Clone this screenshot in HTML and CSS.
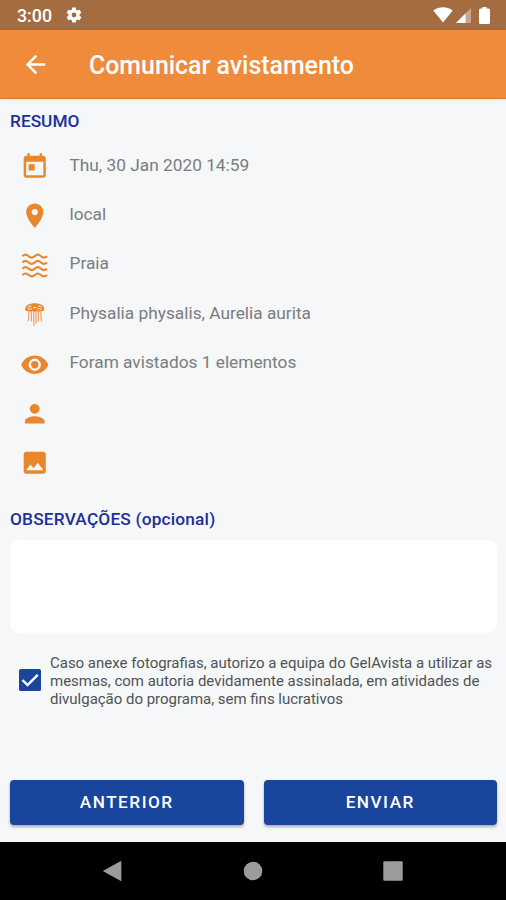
FILE: index.html
```html
<!DOCTYPE html>
<html lang="pt">
<head>
    <meta charset="UTF-8">
    <meta name="viewport" content="width=device-width, initial-scale=1.0">
    <title>Comunicar avistamento</title>
    <link rel="stylesheet" href="styles.css">
</head>
<body>
    <div class="status-bar">
        <span class="time">3:00</span>
        <svg class="gear" viewBox="0 0 24 24"><path fill-rule="evenodd" d="M19.4 13c0-.3.1-.6.1-1s0-.7-.1-1l2.100-1.650c.2-.15.250-.42.120-.64l-2-3.460c-.12-.22-.39-.3-.61-.22l-2.490 1c-.52-.4-1.080-.73-1.690-.98l-.38-2.650A.49.49 0 0 0 14 2h-4c-.25 0-.46.18-.49.42l-.38 2.650c-.61.25-1.170.59-1.690.98l-2.490-1c-.23-.09-.49 0-.61.22l-2 3.460c-.13.22-.07.49.12.64L4.570 11c-.04.3-.07.65-.07 1s.03.66.07 1l-2.110 1.650c-.19.15-.24.42-.12.64l2 3.460c.12.22.39.3.61.22l2.490-1c.52.4 1.080.73 1.690.98l.38 2.650c.03.24.24.42.49.42h4c.25 0 .46-.18.49-.42l.38-2.650c.61-.25 1.170-.59 1.690-.98l2.490 1c.23.09.49 0 .61-.22l2-3.460c.12-.22.070-.49-.12-.64zM12 15.200a3.200 3.200 0 1 1 0-6.400 3.200 3.200 0 0 1 0 6.400z"/></svg>
        <div class="status-icons">
            <svg width="20" height="16" viewBox="0 0 20 16"><path d="M.3 3.500C6-.7 14-.7 19.700 3.500L10 15.500z"/></svg>
            <svg width="15" height="15" viewBox="0 0 15 15"><path d="M0 15L15 0v15z" opacity=".4"/><path d="M0 15L9.500 5.500V15z"/></svg>
            <svg class="battery" width="11" height="17" viewBox="0 0 11 17"><path d="M3.300 0h4.400v1.500H9.500q1.500 0 1.500 1.500v12.500q0 1.500-1.500 1.500h-8Q0 17 0 15.500V3q0-1.500 1.500-1.500h1.800z"/></svg>
        </div>
    </div>

    <header class="app-bar">
        <svg class="back" viewBox="0 0 24 24"><path d="M20 11H7.830l5.590-5.590L12 4l-8 8 8 8 1.410-1.410L7.830 13H20z"/></svg>
        <h1>Comunicar avistamento</h1>
    </header>

    <main class="content">
        <h2>RESUMO</h2>
        <ul class="summary">
            <li>
                <svg viewBox="0 0 24 24"><path d="M19 3h-1V1h-2v2H8V1H6v2H5c-1.110 0-2 .9-2 2v14c0 1.100.89 2 2 2h14c1.100 0 2-.9 2-2V5c0-1.100-.9-2-2-2zm0 16H5V8h14zM7 10h5v5H7z"/></svg>
                <span>Thu, 30 Jan 2020 14:59</span>
            </li>
            <li>
                <svg viewBox="0 0 24 24"><path d="M12 2C8.130 2 5 5.130 5 9c0 5.250 7 13 7 13s7-7.750 7-13c0-3.870-3.130-7-7-7zm0 9.500a2.500 2.500 0 0 1 0-5 2.500 2.500 0 0 1 0 5z"/></svg>
                <span>local</span>
            </li>
            <li>
                <svg class="waves" viewBox="0 0 24 24">
                    <path d="M2 4.200q2.500 -2.400 5 0t5 0 5 0 5 0"/>
                    <path d="M2 9.300q2.500 -2.400 5 0t5 0 5 0 5 0"/>
                    <path d="M2 14.400q2.500 -2.400 5 0t5 0 5 0 5 0"/>
                    <path d="M2 19.500q2.500 -2.400 5 0t5 0 5 0 5 0"/>
                </svg>
                <span>Praia</span>
            </li>
            <li>
                <svg class="jellyfish" viewBox="0 0 24 24">
                    <path class="bell" d="M4.300 7.600C4 4.400 7.500 2.600 12 2.600s8 1.800 7.700 5c-.2 1.500-1.700 2-2.700 1.100-1.200 1.100-2.300 1.100-3.300.2-1 .9-2.400.9-3.400 0-1 .9-2.100.9-3.300-.2-1 .9-2.500.4-2.700-1.100z"/>
                    <path class="shine" d="M6 6.200q1.300-1.500 3.300-1.200M14.700 5q2-.3 3.300 1.200M6.500 7.700q1.600-1.200 3.200-.3M14.300 7.400q1.600-.9 3.200.3M10.800 6.200h2.400"/>
                    <path class="arms" d="M7.200 9v4.200q0 2-.7 4.200M9.300 9v8.500M11.200 9v7.500q0 2 .4 4.500M13.100 9v10M15 9v8.500M17 9v4q0 2 .7 4.500"/>
                </svg>
                <span>Physalia physalis, Aurelia aurita</span>
            </li>
            <li>
                <svg viewBox="0 0 24 24"><path d="M12 4.500C7 4.500 2.730 7.610 1 12c1.730 4.390 6 7.500 11 7.500s9.270-3.110 11-7.500c-1.730-4.390-6-7.500-11-7.500zM12 17a5 5 0 1 1 0-10 5 5 0 0 1 0 10zm0-8a3 3 0 1 0 0 6 3 3 0 0 0 0-6z"/></svg>
                <span>Foram avistados 1 elementos</span>
            </li>
            <li>
                <svg viewBox="0 0 24 24"><path d="M12 12c2.210 0 4-1.790 4-4s-1.790-4-4-4-4 1.790-4 4 1.790 4 4 4zm0 2c-2.670 0-8 1.340-8 4v2h16v-2c0-2.660-5.330-4-8-4z"/></svg>
                <span></span>
            </li>
            <li>
                <svg viewBox="0 0 24 24"><path d="M21 19V5c0-1.100-.9-2-2-2H5c-1.100 0-2 .9-2 2v14c0 1.100.9 2 2 2h14c1.100 0 2-.9 2-2zM8.500 13.500l2.500 3.010L14.500 12l4.500 6H5z"/></svg>
                <span></span>
            </li>
        </ul>

        <h2 class="notes-title">OBSERVAÇÕES (opcional)</h2>
        <textarea class="notes"></textarea>

        <div class="consent">
            <svg class="checkbox" viewBox="0 0 18 18"><rect width="18" height="18" rx="1.500"/><path d="M2.800 9l4.200 4.200 8.300-8.400"/></svg>
            <p>Caso anexe fotografias, autorizo a equipa do GelAvista a utilizar as<br>mesmas, com autoria devidamente assinalada, em atividades de<br>divulgação do programa, sem fins lucrativos</p>
        </div>

        <div class="actions">
            <button>ANTERIOR</button>
            <button>ENVIAR</button>
        </div>
    </main>

    <nav class="nav-bar">
        <svg viewBox="0 0 22 22"><path d="M.8 11L19.300 .8v20.400z"/></svg>
        <svg viewBox="0 0 22 22"><circle cx="11" cy="11" r="9.300"/></svg>
        <svg viewBox="0 0 22 22"><rect x="1.300" y="1.300" width="19.400" height="19.400" rx="1"/></svg>
    </nav>
</body>
</html>
```

FILE: styles.css
```css
* {
    box-sizing: border-box;
}
body {
    font-family: Roboto, sans-serif;
    display: flex;
    flex-direction: column;
    height: 900px;
    background-color: #f5f7f9;
    margin: 0;
    overflow: hidden;
}
.status-bar {
    height: 30px;
    padding: 2px 16px 0 17px;
    display: flex;
    align-items: center;
    background-color: #a36d41;
    color: white;
    fill: white;
}
.time {
    width: 48px;
    margin-bottom: 1px;
    font-size: 17.8px;
    font-weight: 500;
}
.gear {
    width: 18px;
    height: 18px;
    margin-bottom: 2px;
}
.status-icons {
    margin-left: auto;
    margin-bottom: 2px;
    display: flex;
    align-items: center;
    gap: 3px;
}
.battery {
    margin-left: 5px;
}
.app-bar {
    height: 69px;
    padding: 1px 21px 0;
    display: flex;
    align-items: center;
    background-color: #ef8b3a;
    border-bottom: 1px solid #e07a1c;
    box-shadow: 0 1px 5px rgba(0,60,60,0.08);
    color: white;
}
.back {
    width: 29px;
    height: 29px;
    margin-right: 39px;
    fill: white;
}
h1 {
    margin: 2px 0 0;
    font-size: 24.9px;
    font-weight: 500;
}
.content {
    flex-grow: 1;
    padding: 11px 9px 17px 10px;
    display: flex;
    flex-direction: column;
}
h2 {
    margin: 0;
    font-size: 17.3px;
    line-height: 22px;
    font-weight: 500;
    color: #20309a;
}
.notes-title {
    letter-spacing: 0.18px;
}
.summary {
    list-style: none;
    margin: 10px 0 20px;
    padding: 0;
}
.summary li {
    height: 49.4px;
    padding-left: 10px;
    display: flex;
    align-items: center;
}
.summary svg {
    width: 29.5px;
    height: 29.5px;
    margin-right: 20px;
    fill: #ea872d;
}
.summary span {
    margin-bottom: 4px;
    font-size: 17.3px;
    color: #7b7d7f;
}
.summary .waves {
    fill: none;
    stroke: #ea872d;
    stroke-width: 1.7;
}
.jellyfish .shine {
    fill: none;
    stroke: #f5f7f9;
    stroke-width: 0.8;
}
.jellyfish .arms {
    fill: none;
    stroke: #eea266;
    stroke-width: 1;
}
.notes {
    height: 93px;
    margin-top: 10px;
    padding: 10px;
    border: none;
    border-radius: 9px;
    background-color: white;
    resize: none;
}
.consent {
    margin-top: 20px;
    padding-left: 9px;
    display: flex;
    align-items: flex-start;
}
.checkbox {
    width: 22px;
    height: 22px;
    margin: 16px 9px 0 0;
    flex-shrink: 0;
    fill: #19459c;
}
.checkbox path {
    fill: none;
    stroke: white;
    stroke-width: 2;
}
.consent p {
    margin: 1px 0 0;
    font-size: 14.98px;
    line-height: 18px;
    color: #505254;
    white-space: nowrap;
}
.actions {
    margin-top: auto;
    display: flex;
    gap: 20px;
}
.actions button {
    flex: 1;
    height: 45px;
    padding: 0 0 1px;
    border: none;
    border-radius: 4px;
    background-color: #19459c;
    box-shadow: 0 2px 3px rgba(0,0,0,0.3);
    color: white;
    font-family: inherit;
    font-size: 17.2px;
    font-weight: 500;
    letter-spacing: 1.5px;
}
.nav-bar {
    height: 58px;
    display: flex;
    justify-content: center;
    align-items: center;
    gap: 118px;
    background-color: black;
}
.nav-bar svg {
    width: 22px;
    height: 22px;
    fill: #9c9c9c;
}
```
